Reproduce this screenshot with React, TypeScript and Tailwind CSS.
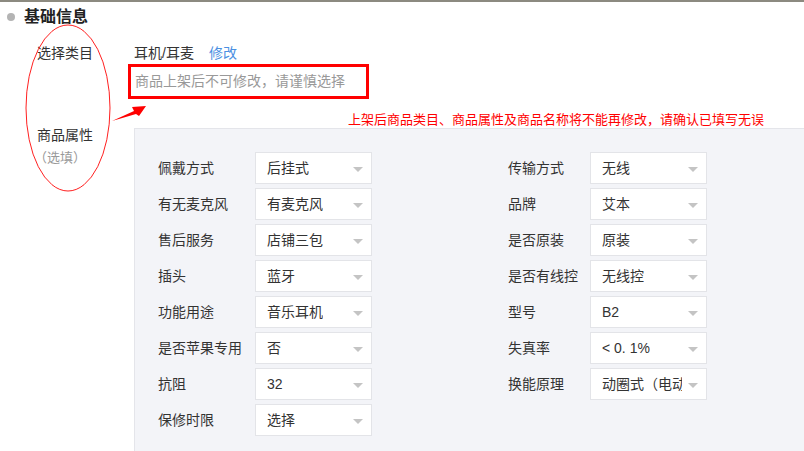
import React from "react";

interface Attr {
  label: string;
  value: string;
}

const leftAttrs: Attr[] = [
  { label: "佩戴方式", value: "后挂式" },
  { label: "有无麦克风", value: "有麦克风" },
  { label: "售后服务", value: "店铺三包" },
  { label: "插头", value: "蓝牙" },
  { label: "功能用途", value: "音乐耳机" },
  { label: "是否苹果专用", value: "否" },
  { label: "抗阻", value: "32" },
  { label: "保修时限", value: "选择" },
];

const rightAttrs: Attr[] = [
  { label: "传输方式", value: "无线" },
  { label: "品牌", value: "艾本" },
  { label: "是否原装", value: "原装" },
  { label: "是否有线控", value: "无线控" },
  { label: "型号", value: "B2" },
  { label: "失真率", value: "< 0. 1%" },
  { label: "换能原理", value: "动圈式（电动式）" },
];

const font = {
  fontFamily: '"Liberation Sans", "Noto Sans CJK SC", sans-serif',
};

function SelectBox({ value }: { value: string }) {
  return (
    <div className="relative flex h-[32px] w-[117px] items-center border border-[#e3e4e8] bg-white pl-[11px] pr-[24px]">
      <span className="overflow-hidden whitespace-nowrap text-[14px] text-[#333]">
        {value}
      </span>
      <span className="absolute right-[8px] top-[14px] h-0 w-0 border-x-[5px] border-t-[5px] border-x-transparent border-t-[#c4c4c4]" />
    </div>
  );
}

function AttrRow({ attr, labelWidth }: { attr: Attr; labelWidth: string }) {
  return (
    <div className="flex h-[32px] items-center">
      <span className={`${labelWidth} text-[14px] text-[#333]`}>
        {attr.label}
      </span>
      <SelectBox value={attr.value} />
    </div>
  );
}

export default function App() {
  return (
    <div
      className="relative h-[451px] w-[804px] overflow-hidden border-t-2 border-[#8c8a80] bg-white"
      style={font}
    >
      {/* title */}
      <div className="flex items-center pl-[7px] pt-[3px]">
        <span className="mr-[9px] h-[8px] w-[8px] rounded-full bg-[#b4b4b4]" />
        <span className="text-[16px] font-bold text-[#222]">基础信息</span>
      </div>

      <div className="flex">
        {/* left labels */}
        <div className="w-[134px] shrink-0 pl-[37px] pt-[14px] text-[14px] text-[#333]">
          <div>选择类目</div>
          <div className="mt-[61px]">商品属性</div>
          <div className="ml-[-3px] mt-[2px] text-[13px] text-[#999]">（选填）</div>
        </div>

        <div className="flex-1">
          <div className="pt-[14px] text-[14px]">
            <span className="text-[#333]">耳机/耳麦</span>
            <span className="ml-[15px] text-[#4a90e2]">修改</span>
          </div>
          <div className="ml-[-6px] flex h-[35px] w-[241px] items-center border-[3px] border-[#ff0000] pl-[4px] text-[14px] text-[#999]">
            商品上架后不可修改，请谨慎选择
          </div>
          <div className="mt-[13px] pl-[214px] text-[13px] leading-[16px] text-[#ff0000]">
            上架后商品类目、商品属性及商品名称将不能再修改，请确认已填写无误
          </div>

          {/* attribute panel */}
          <div className="h-[340px] border-l border-t border-[#e4e5ea] bg-[#f3f4f8] pl-[23px] pt-[23px]">
            <div className="flex">
              <div className="flex w-[350px] flex-col gap-[4px]">
                {leftAttrs.map((a) => (
                  <AttrRow key={a.label} attr={a} labelWidth="w-[97px]" />
                ))}
              </div>
              <div className="flex flex-col gap-[4px]">
                {rightAttrs.map((a) => (
                  <AttrRow key={a.label} attr={a} labelWidth="w-[82px]" />
                ))}
              </div>
            </div>
          </div>
        </div>
      </div>

      {/* annotations */}
      <svg
        className="pointer-events-none absolute left-0 top-0"
        width="804"
        height="451"
      >
        <ellipse
          cx="68"
          cy="106"
          rx="42"
          ry="83"
          fill="none"
          stroke="#ff2020"
          strokeWidth="1"
        />
        <polygon
          points="112,119 134,109 132,105 146,104 139,114 136,112"
          fill="#ff0000"
        />
      </svg>
    </div>
  );
}
